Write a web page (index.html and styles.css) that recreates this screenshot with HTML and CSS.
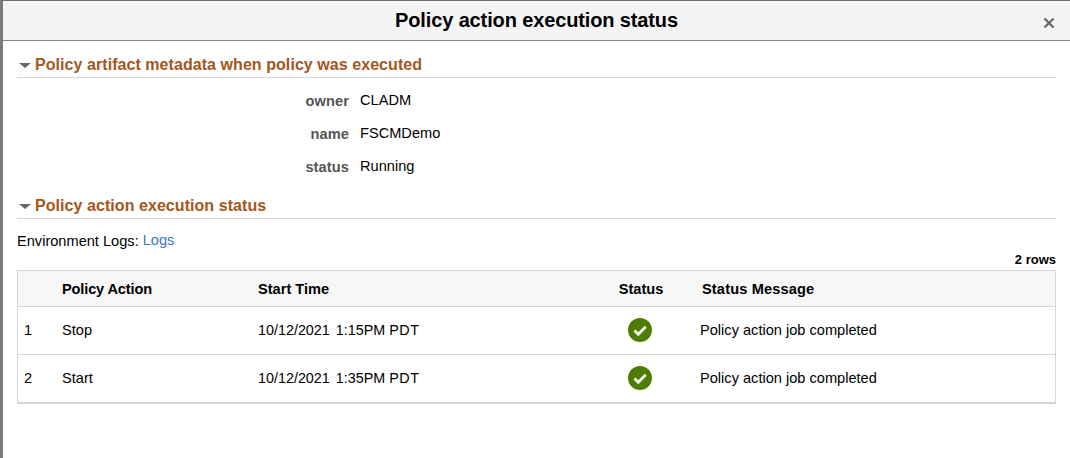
FILE: index.html
```html
<!DOCTYPE html>
<html lang="en">
<head>
<meta charset="utf-8">
<title>Policy action execution status</title>
<link rel="stylesheet" href="styles.css">
</head>
<body>
<div class="modal">
  <header class="titlebar">
    <h1>Policy action execution status</h1>
    <button class="close" aria-label="Close">
      <svg width="12" height="12" viewBox="0 0 12 12"><path d="M1.5 1.5l9 9M10.5 1.5l-9 9" stroke="#666" stroke-width="2.2" fill="none"/></svg>
    </button>
  </header>
  <main class="content">
    <section class="group meta">
      <h2 class="group-title"><span class="caret"></span>Policy artifact metadata when policy was executed</h2>
      <dl class="fields">
        <div class="field"><dt>owner</dt><dd>CLADM</dd></div>
        <div class="field"><dt>name</dt><dd>FSCMDemo</dd></div>
        <div class="field"><dt>status</dt><dd>Running</dd></div>
      </dl>
    </section>
    <section class="group">
      <h2 class="group-title"><span class="caret"></span>Policy action execution status</h2>
      <p class="logs">Environment Logs: <a href="#">Logs</a></p>
      <div class="rowcount">2 rows</div>
      <table class="grid">
        <thead>
          <tr>
            <th class="c-num"></th>
            <th class="c-action">Policy Action</th>
            <th class="c-time">Start Time</th>
            <th class="c-status">Status</th>
            <th class="c-msg">Status Message</th>
          </tr>
        </thead>
        <tbody>
          <tr>
            <td>1</td><td class="t-action">Stop</td><td class="t-time">10/12/2021&nbsp; 1:15PM <span class="tz">PDT</span></td>
            <td class="t-status"><svg class="ok" width="24" height="24" viewBox="0 0 24 24"><circle cx="12" cy="12" r="12" fill="#4f7c05"/><path d="M6.5 12.5l3.8 3.8 7.4-7.6" stroke="#fff" stroke-width="2.8" fill="none"/></svg></td>
            <td class="t-msg">Policy action job completed</td>
          </tr>
          <tr>
            <td>2</td><td class="t-action">Start</td><td class="t-time">10/12/2021&nbsp; 1:35PM <span class="tz">PDT</span></td>
            <td class="t-status"><svg class="ok" width="24" height="24" viewBox="0 0 24 24"><circle cx="12" cy="12" r="12" fill="#4f7c05"/><path d="M6.5 12.5l3.8 3.8 7.4-7.6" stroke="#fff" stroke-width="2.8" fill="none"/></svg></td>
            <td class="t-msg">Policy action job completed</td>
          </tr>
        </tbody>
      </table>
    </section>
  </main>
</div>
</body>
</html>
```
FILE: styles.css
```css
* { box-sizing: border-box; }
html, body { margin: 0; padding: 0; height: 100%; background: #fff; overflow: hidden; }
body { font-family: "Liberation Sans", Arial, sans-serif; font-size: 14.6px; color: #000; }
.modal {
  height: 458px;
  border-top: 1px solid #6e6e6e;
  border-left: 3px solid #7a7a7a;
}
.titlebar {
  height: 40px;
  background: #f4f4f4;
  border-bottom: 1px solid #7b858c;
  display: flex;
  align-items: center;
  justify-content: center;
  position: relative;
}
.titlebar h1 { margin: 0 0 1px; font-size: 20px; font-weight: bold; line-height: 38px; letter-spacing: -0.13px; }
.close {
  position: absolute;
  right: 15px;
  top: 16px;
  width: 12px;
  height: 12px;
  padding: 0;
  border: 0;
  background: none;
  display: flex;
}
.content { padding: 0 14px; }
.group-title {
  margin: 0;
  height: 37px;
  padding-top: 10px;
  line-height: 19px;
  font-size: 16px;
  font-weight: bold;
  letter-spacing: 0.06px;
  color: #a5561b;
  border-bottom: 1px solid #d2d5d9;
  display: flex;
  align-items: center;
}
.caret {
  width: 0;
  height: 0;
  margin: 3px 4px 0 2px;
  border-left: 6px solid transparent;
  border-right: 6px solid transparent;
  border-top: 5px solid #666;
}
.meta { height: 141px; }
.fields { margin: 0; padding-top: 6px; }
.field { display: flex; height: 33px; align-items: center; }
.field dt { width: 332px; text-align: right; font-weight: bold; color: #555; padding-top: 1px; letter-spacing: 0.1px; }
.field dd { margin: 0 0 1px 11px; }
.logs { margin: 0; height: 37px; padding-top: 14px; line-height: 16px; white-space: nowrap; }
.logs a { color: #3a78c2; text-decoration: none; position: relative; top: -1px; }
.rowcount { text-align: right; font-size: 13px; font-weight: bold; height: 14px; line-height: 14px; margin-top: -3px; }
.grid {
  width: 1039px;
  margin-top: 3px;
  border-collapse: separate;
  border-spacing: 0;
  table-layout: fixed;
  border: 1px solid #d2d5d9;
  border-bottom-width: 2px;
}
.grid th {
  height: 36px;
  background: #f7f7f7;
  text-align: left;
  font-weight: bold;
  border-bottom: 1px solid #d2d5d9;
  padding: 0;
}
.grid td { height: 48px; padding: 0 0 2px; border-bottom: 1px solid #d2d5d9; }
.grid tbody tr:last-child td { height: 47px; border-bottom: 0; }
.c-num { width: 44px; }
.c-action { width: 196px; letter-spacing: -0.15px; }
.c-time { width: 322px; }
.c-status { width: 120px; text-align: center !important; padding-left: 2px !important; }
.grid td:first-child { padding-left: 6px; }
.t-action { padding-left: 0 !important; }
.t-time { font-size: 14.35px; word-spacing: -1px; }
.tz { margin-left: 1px; letter-spacing: 0.6px; }
.t-status { text-align: center; }
.c-msg { padding-left: 2px !important; letter-spacing: 0.14px; }
.ok { display: block; margin: 0 auto; }
```
